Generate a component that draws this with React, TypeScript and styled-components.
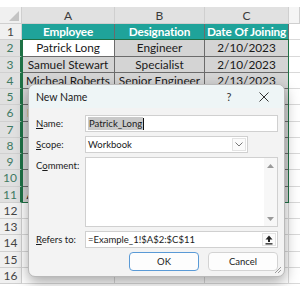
import { createGlobalStyle, styled } from "styled-components";

const TEAL = "#1fa39a";
const GRID = "#d9d9d9";
const TABLE_LINE = "#6b6b6b";
const SEL_BG = "#d4d4d4";
const SEL_GREEN = "#1e7145";
const ROW_H = 16.25;

const GlobalStyle = createGlobalStyle`
  html, body {
    margin: 0;
    padding: 0;
    background: #ffffff;
    overflow: hidden;
  }
`;

const Page = styled.div`
  position: relative;
  width: 300px;
  height: 286px;
  overflow: hidden;
  background: #ffffff;
  padding-top: 7px;
  box-sizing: border-box;
  font-family: Lato, "Liberation Sans", sans-serif;
`;

const ColHeaderRow = styled.div`
  display: grid;
  grid-template-columns: 22px 93px 90px 84px 1fr;
  height: 17px;
`;

const Corner = styled.div`
  position: relative;
  background: #f0f0f0;
  border-right: 1px solid #cfcfcf;
  border-bottom: 1px solid #cfcfcf;
  box-sizing: border-box;

  &::after {
    content: "";
    position: absolute;
    right: 2px;
    bottom: 2px;
    border-left: 10px solid transparent;
    border-bottom: 10px solid #c4c4c4;
  }
`;

const ColHead = styled.div<{ $selected?: boolean }>`
  display: flex;
  align-items: center;
  justify-content: center;
  background: ${(p) => (p.$selected ? "#e1e1e1" : "#f5f5f5")};
  color: ${(p) => (p.$selected ? "#3b3b3b" : "#666")};
  border-right: 1px solid #cfcfcf;
  border-bottom: 1px solid #cfcfcf;
  box-sizing: border-box;
  font-size: 12px;
`;

const DataRow = styled.div`
  display: grid;
  grid-template-columns: 22px 93px 90px 84px 1fr;
  height: ${ROW_H}px;
`;

const RowHead = styled.div<{ $selected?: boolean }>`
  display: flex;
  align-items: center;
  justify-content: center;
  background: ${(p) => (p.$selected ? "#e0e0e0" : "#f0f0f0")};
  color: ${(p) => (p.$selected ? "#3f7a63" : "#444")};
  border-bottom: 1px solid #d0d0d0;
  border-right: ${(p) => (p.$selected ? `2px solid ${SEL_GREEN}` : "1px solid #cfcfcf")};
  box-sizing: border-box;
  font-size: 12px;
`;

type CellKind = "head" | "active" | "selected" | "plain";

const Cell = styled.div<{ $kind: CellKind }>`
  display: flex;
  align-items: center;
  justify-content: center;
  overflow: hidden;
  white-space: nowrap;
  box-sizing: border-box;
  font-size: 11.8px;
  letter-spacing: ${(p) => (p.$kind === "head" ? "-0.15px" : "0")};
  font-weight: ${(p) => (p.$kind === "head" ? 700 : 400)};
  color: ${(p) => (p.$kind === "head" ? "#ffffff" : "#1a1a1a")};
  background: ${(p) =>
    p.$kind === "head" ? TEAL : p.$kind === "selected" ? SEL_BG : "#ffffff"};
  border-right: 1px solid ${(p) => (p.$kind === "plain" ? GRID : TABLE_LINE)};
  border-bottom: 1px solid ${(p) => (p.$kind === "plain" ? GRID : TABLE_LINE)};
`;

const Blank = styled.div`
  border-bottom: 1px solid ${GRID};
  box-sizing: border-box;
`;

const Selection = styled.div`
  position: absolute;
  left: 22px;
  top: 39px;
  width: 267px;
  height: 164px;
  border: 1px solid ${SEL_GREEN};
  box-sizing: border-box;
  pointer-events: none;
`;

/* dialog */

const Dialog = styled.div`
  position: absolute;
  left: 28px;
  top: 84px;
  width: 257px;
  height: 193px;
  background: #f3f3f3;
  border: 1px solid #b9b9b9;
  border-radius: 7px;
  box-shadow: 0 5px 14px rgba(0, 0, 0, 0.35);
  box-sizing: border-box;
  overflow: hidden;
  font-family: Lato, "Noto Sans", sans-serif;
  font-size: 9.5px;
  color: #1b1b1b;
`;

const TitleBar = styled.div`
  display: flex;
  align-items: center;
  height: 23px;
  padding: 0 0 0 7px;
  background: #eef5f6;
`;

const Title = styled.div`
  flex: 1;
  font-size: 10.5px;
`;

const TitleButton = styled.div<{ $w: number }>`
  display: flex;
  align-items: center;
  justify-content: center;
  width: ${(p) => p.$w}px;
  height: 23px;
  color: #333;
  font-size: 11px;
`;

const Body = styled.div`
  display: grid;
  grid-template-columns: 49px 1fr;
  grid-template-rows: 17px 17px 70px 17px 19px;
  row-gap: 4px;
  padding: 7px 6px 0 7px;
`;

const Label = styled.div<{ $top?: boolean }>`
  display: flex;
  align-items: ${(p) => (p.$top ? "flex-start" : "center")};
  padding-top: ${(p) => (p.$top ? "3px" : "0")};

  & u {
    text-decoration-thickness: 1px;
    text-underline-offset: 1px;
  }
`;

const Field = styled.div<{ $width?: number }>`
  display: flex;
  align-items: center;
  width: ${(p) => (p.$width ? `${p.$width}px` : "auto")};
  background: #ffffff;
  border: 1px solid #d0d0d0;
  box-sizing: border-box;
  padding-left: 2px;
  overflow: hidden;
  white-space: nowrap;
`;

const Selected = styled.span`
  background: #c9c9c9;
  padding: 1px 1px;
`;

const Caret = styled.span`
  display: inline-block;
  width: 1px;
  height: 12px;
  background: #111;
`;

const FieldText = styled.span`
  flex: 1;
`;

const SideButton = styled.div`
  display: flex;
  align-items: center;
  justify-content: center;
  align-self: stretch;
  width: 14px;
  margin: 1px;
  border: 1px solid #e3e3e3;
  background: #fbfbfb;
  box-sizing: border-box;
`;

const TextArea = styled.div`
  display: flex;
  background: #ffffff;
  border: 1px solid #d0d0d0;
  box-sizing: border-box;
`;

const Scrollbar = styled.div`
  margin-left: auto;
  width: 13px;
  display: flex;
  flex-direction: column;
  justify-content: space-between;
  align-items: center;
  padding: 6px 0 5px;
  background: #f7f7f7;
`;

const Buttons = styled.div`
  grid-column: 1 / span 2;
  display: flex;
  justify-content: flex-end;
  gap: 9px;
`;

const Button = styled.div<{ $primary?: boolean }>`
  display: flex;
  align-items: center;
  justify-content: center;
  width: 70px;
  background: #fdfdfd;
  border: 1px solid ${(p) => (p.$primary ? "#5a9ad6" : "#d3d3d3")};
  border-radius: 4px;
  box-sizing: border-box;
`;

const Grip = styled.svg`
  position: absolute;
  right: 2px;
  bottom: 2px;
`;

const rows: [string, string, string][] = [
  ["Patrick Long", "Engineer", "2/10/2023"],
  ["Samuel Stewart", "Specialist", "2/10/2023"],
  ["Micheal Roberts", "Senior Engineer", "2/13/2023"],
  ["Emily Clark", "Analyst", "2/15/2023"],
  ["Ivan Richardson", "Manager", "2/20/2023"],
  ["David Lee", "Technician", "2/22/2023"],
  ["Sophia Turner", "Engineer", "3/1/2023"],
  ["James Miller", "Specialist", "3/3/2023"],
  ["Olivia Brown", "Designer", "3/8/2023"],
  ["Alex Richardson", "Consultant", "3/10/2023"],
];

const TriUp = () => (
  <svg width="7" height="4" viewBox="0 0 7 4">
    <path d="M0 4 L3.5 0 L7 4 Z" fill="#9a9a9a" />
  </svg>
);

const TriDown = () => (
  <svg width="7" height="4" viewBox="0 0 7 4">
    <path d="M0 0 L3.5 4 L7 0 Z" fill="#9a9a9a" />
  </svg>
);

export default function App() {
  return (
    <>
      <GlobalStyle />
      <Page>
        <ColHeaderRow>
          <Corner />
          <ColHead $selected>A</ColHead>
          <ColHead $selected>B</ColHead>
          <ColHead $selected>C</ColHead>
          <ColHead />
        </ColHeaderRow>

        <DataRow>
          <RowHead>1</RowHead>
          <Cell $kind="head">Employee</Cell>
          <Cell $kind="head">Designation</Cell>
          <Cell $kind="head">Date Of Joining</Cell>
          <Blank />
        </DataRow>

        {rows.map((r, i) => (
          <DataRow key={i}>
            <RowHead $selected>{i + 2}</RowHead>
            <Cell $kind={i === 0 ? "active" : "selected"}>{r[0]}</Cell>
            <Cell $kind="selected">{r[1]}</Cell>
            <Cell $kind="selected">{r[2]}</Cell>
            <Blank />
          </DataRow>
        ))}

        {[12, 13, 14, 15, 16].map((n) => (
          <DataRow key={n}>
            <RowHead>{n}</RowHead>
            <Cell $kind="plain" />
            <Cell $kind="plain" />
            <Cell $kind="plain" />
            <Blank />
          </DataRow>
        ))}

        <Selection />

        <Dialog>
          <TitleBar>
            <Title>New Name</Title>
            <TitleButton $w={30}>?</TitleButton>
            <TitleButton $w={40}>
              <svg width="10" height="10" viewBox="0 0 10 10">
                <path d="M0.5 0.5 L9.5 9.5 M9.5 0.5 L0.5 9.5" stroke="#333" strokeWidth="1" />
              </svg>
            </TitleButton>
          </TitleBar>

          <Body>
            <Label>
              <span><u>N</u>ame:</span>
            </Label>
            <Field>
              <Selected>Patrick_Long</Selected>
              <Caret />
            </Field>

            <Label>
              <span><u>S</u>cope:</span>
            </Label>
            <Field $width={163}>
              <FieldText>Workbook</FieldText>
              <SideButton>
                <svg width="8" height="5" viewBox="0 0 8 5">
                  <path d="M0.5 0.5 L4 4 L7.5 0.5" stroke="#777" strokeWidth="1" fill="none" />
                </svg>
              </SideButton>
            </Field>

            <Label $top>
              <span>C<u>o</u>mment:</span>
            </Label>
            <TextArea>
              <Scrollbar>
                <TriUp />
                <TriDown />
              </Scrollbar>
            </TextArea>

            <Label>
              <span><u>R</u>efers to:</span>
            </Label>
            <Field>
              <FieldText>=Example_1!$A$2:$C$11</FieldText>
              <SideButton>
                <svg width="8" height="10" viewBox="0 0 8 10">
                  <path d="M4 0.5 L7.5 4.5 L5 4.5 L5 7 L3 7 L3 4.5 L0.5 4.5 Z" fill="#222" />
                  <rect x="0.5" y="8.2" width="7" height="1.3" fill="#222" />
                </svg>
              </SideButton>
            </Field>

            <Buttons>
              <Button $primary>OK</Button>
              <Button>Cancel</Button>
            </Buttons>
          </Body>

          <Grip width="8" height="8" viewBox="0 0 8 8">
            <path d="M7 1 L1 7 M7 4 L4 7" stroke="#9b9b9b" strokeWidth="1" />
          </Grip>
        </Dialog>
      </Page>
    </>
  );
}
